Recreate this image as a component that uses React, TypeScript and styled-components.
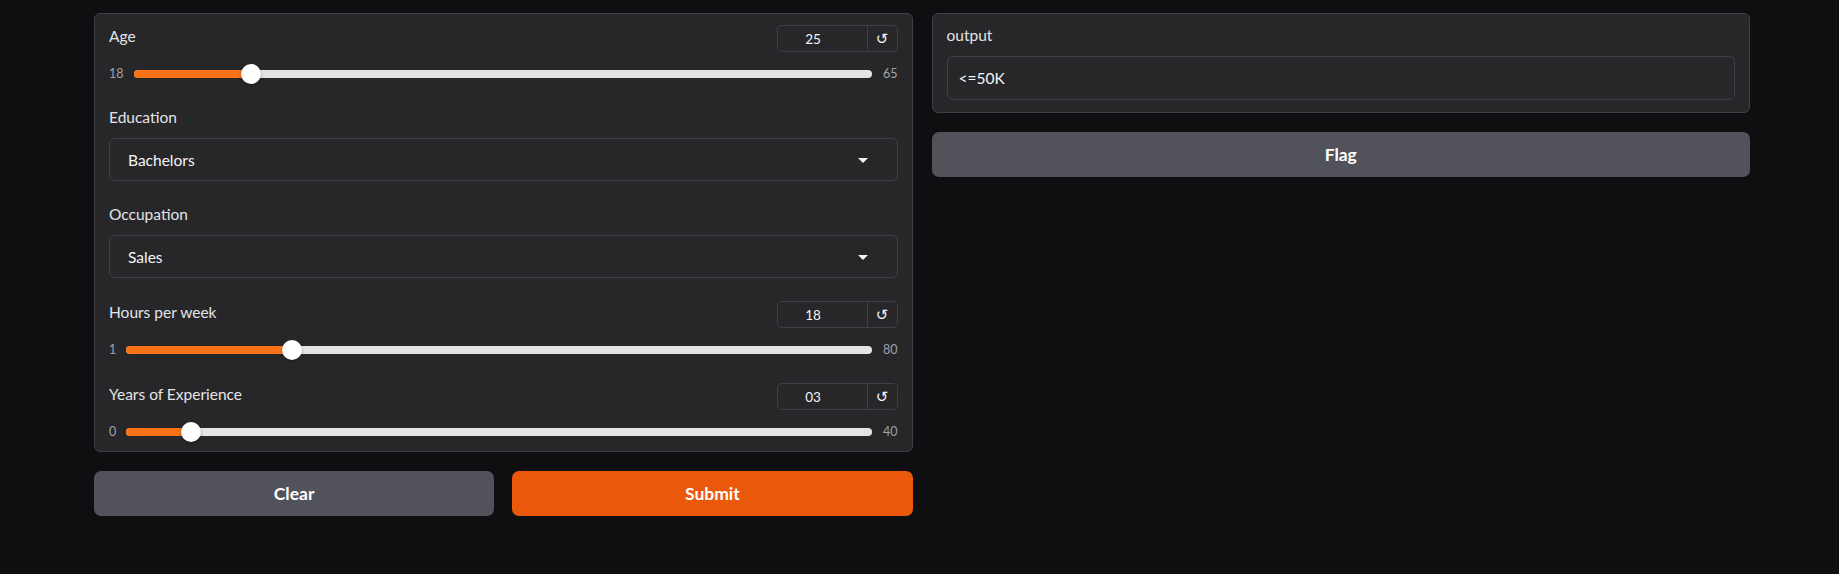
import React from "react";
import styled, { createGlobalStyle } from "styled-components";

const GlobalStyle = createGlobalStyle`
  html, body {
    margin: 0;
    padding: 0;
    background: #0f0f11;
    font-family: "Lato", "Liberation Sans", sans-serif;
    color: #f4f4f5;
  }
  #root { min-height: 574px; }
  * { box-sizing: border-box; }
`;

const Page = styled.div`
  padding: 13px 0 0 94px;
`;

const Columns = styled.div`
  width: 1656px;
  display: grid;
  grid-template-columns: 1fr 1fr;
  column-gap: 19px;
  align-items: start;
`;

const Column = styled.div`
  display: flex;
  flex-direction: column;
  gap: 19px;
`;

const Panel = styled.div<{ $bottom?: number }>`
  background: #27272a;
  border: 1px solid #3f3f46;
  border-radius: 6px;
  padding: 11px 14px ${(p) => p.$bottom ?? 9}px;
  display: flex;
  flex-direction: column;
  gap: 23px;
`;

const Block = styled.div`
  display: flex;
  flex-direction: column;
`;

const Header = styled.div`
  display: flex;
  justify-content: space-between;
  align-items: flex-start;
  height: 27px;
`;

const Label = styled.span<{ $mb?: number; $pt?: number }>`
  display: block;
  font-size: 15.5px;
  line-height: 20px;
  color: #e4e4e7;
  padding-top: ${(p) => p.$pt ?? 0}px;
  margin-bottom: ${(p) => p.$mb ?? 0}px;
`;

const NumberBox = styled.div`
  display: flex;
  width: 121px;
  height: 27px;
  border: 1px solid #3f3f46;
  border-radius: 5px;
  overflow: hidden;
`;

const NumberInput = styled.input`
  width: 89px;
  height: 100%;
  border: none;
  background: transparent;
  color: #f4f4f5;
  font-family: "Lato", "Liberation Sans", sans-serif;
  font-size: 13.5px;
  text-align: center;
  padding: 0 18px 0 0;
  outline: none;
`;

const ResetButton = styled.button`
  flex: 1;
  height: 100%;
  border: none;
  border-left: 1px solid #3f3f46;
  background: transparent;
  color: #f4f4f5;
  font-family: "DejaVu Sans", sans-serif;
  font-size: 15px;
  padding: 0;
  display: flex;
  align-items: center;
  justify-content: center;
`;

const SliderRow = styled.div`
  display: flex;
  align-items: center;
  gap: 10px;
  height: 20px;
  margin-top: 12px;
`;

const Bound = styled.span<{ $side?: "min" | "max" }>`
  font-size: 12.5px;
  color: #a1a1aa;
  line-height: 20px;
  padding-left: ${(p) => (p.$side === "max" ? 1 : 0)}px;
`;

const Track = styled.div`
  position: relative;
  flex: 1;
  height: 8px;
  border-radius: 4px;
  background: #e4e4e7;
`;

const Fill = styled.div`
  position: absolute;
  left: 0;
  top: 0;
  bottom: 0;
  border-radius: 4px;
  background: #f97316;
`;

const Thumb = styled.div`
  position: absolute;
  top: 50%;
  width: 20px;
  height: 20px;
  border-radius: 50%;
  background: #ffffff;
  transform: translate(-50%, -50%);
  box-shadow: 0 1px 3px rgba(0, 0, 0, 0.35);
`;

const Dropdown = styled.div`
  height: 43px;
  border: 1px solid #3f3f46;
  border-radius: 6px;
  background: #27272a;
  display: flex;
  align-items: center;
  justify-content: space-between;
  padding: 0 29px 0 18px;
  font-size: 15.5px;
  color: #f4f4f5;
`;

const Caret = styled.span`
  width: 0;
  height: 0;
  border-left: 5px solid transparent;
  border-right: 5px solid transparent;
  border-top: 5px solid #f4f4f5;
  margin-top: 1px;
`;

const TextOutput = styled.div`
  height: 44px;
  border: 1px solid #3f3f46;
  border-radius: 6px;
  display: flex;
  align-items: center;
  padding: 0 11px;
  font-size: 15.5px;
  color: #f4f4f5;
`;

const ButtonRow = styled.div`
  display: grid;
  grid-template-columns: 1fr 1fr;
  gap: 18px;
`;

const Button = styled.button<{ $primary?: boolean }>`
  height: 45px;
  border: none;
  border-radius: 7px;
  background: ${(p) => (p.$primary ? "#ea580c" : "#52525b")};
  color: #ffffff;
  font-family: "Lato", "Liberation Sans", sans-serif;
  font-weight: 700;
  font-size: 17.5px;
  cursor: pointer;
`;

type SliderProps = { label: string; value: number; shown: string; min: number; max: number };

function Slider({ label, value, shown, min, max }: SliderProps) {
  const frac = (value - min) / (max - min);
  const pos = `calc(10px + ${frac} * (100% - 20px))`;
  return (
    <Block>
      <Header>
        <Label $pt={1}>{label}</Label>
        <NumberBox>
          <NumberInput value={shown} readOnly />
          <ResetButton aria-label="reset">↺</ResetButton>
        </NumberBox>
      </Header>
      <SliderRow>
        <Bound $side="min">{min}</Bound>
        <Track>
          <Fill style={{ width: pos }} />
          <Thumb style={{ left: pos }} />
        </Track>
        <Bound $side="max">{max}</Bound>
      </SliderRow>
    </Block>
  );
}

function Select({ label, value }: { label: string; value: string }) {
  return (
    <Block>
      <Label $mb={11}>{label}</Label>
      <Dropdown>
        <span>{value}</span>
        <Caret />
      </Dropdown>
    </Block>
  );
}

export default function App() {
  return (
    <>
      <GlobalStyle />
      <Page>
        <Columns>
          <Column>
            <Panel>
              <Slider label="Age" value={25} shown="25" min={18} max={65} />
              <Select label="Education" value="Bachelors" />
              <Select label="Occupation" value="Sales" />
              <Slider label="Hours per week" value={18} shown="18" min={1} max={80} />
              <Slider label="Years of Experience" value={3} shown="03" min={0} max={40} />
            </Panel>
            <ButtonRow>
              <Button>Clear</Button>
              <Button $primary>Submit</Button>
            </ButtonRow>
          </Column>
          <Column>
            <Panel $bottom={12}>
              <Block>
                <Label $mb={11}>output</Label>
                <TextOutput>&lt;=50K</TextOutput>
              </Block>
            </Panel>
            <Button>Flag</Button>
          </Column>
        </Columns>
      </Page>
    </>
  );
}
